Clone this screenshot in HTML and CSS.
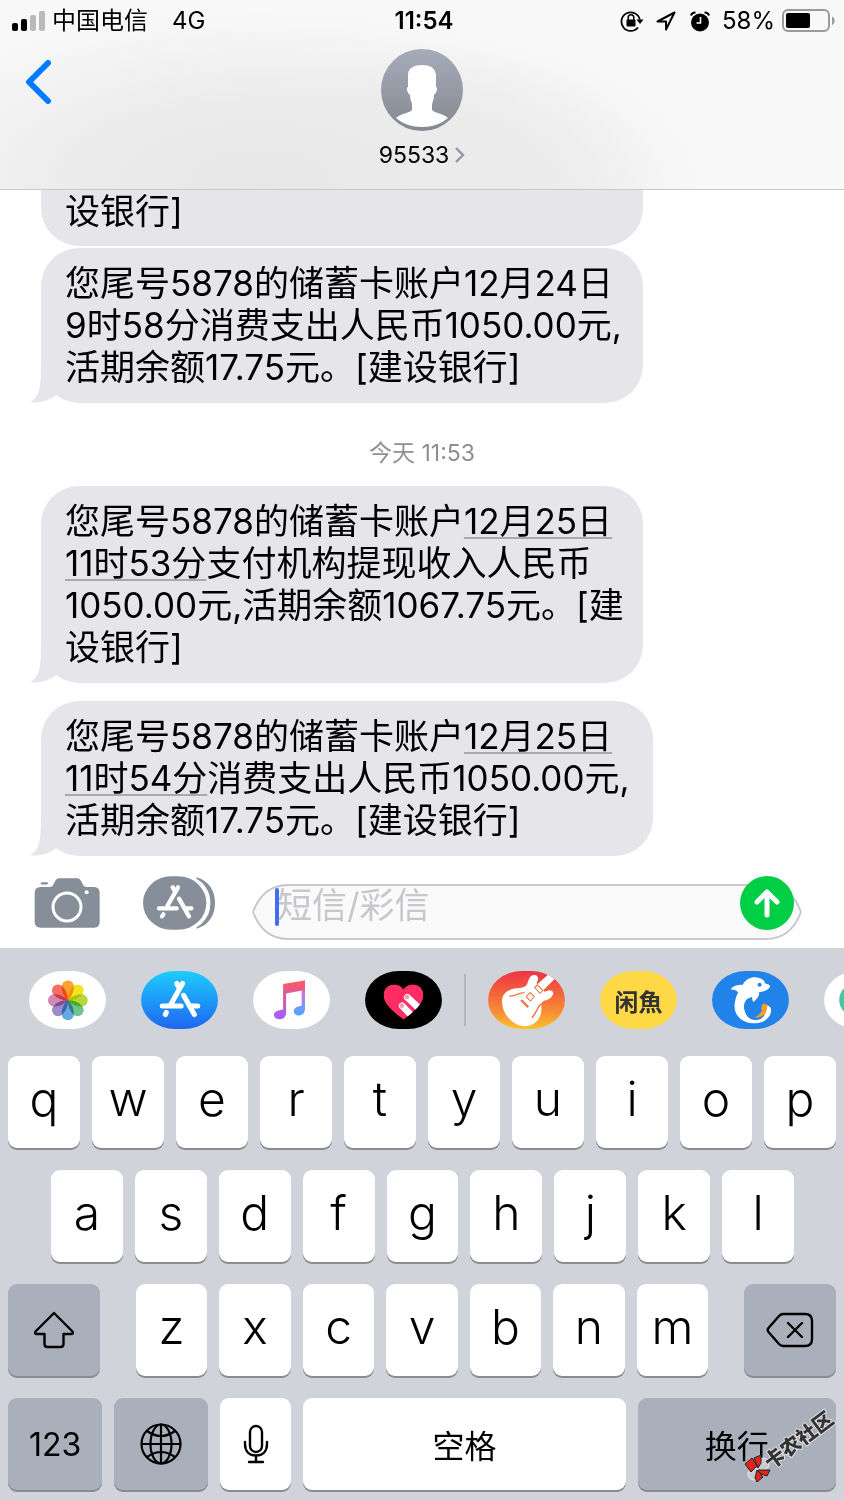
FILE: index.html
```html
<!DOCTYPE html>
<html lang="zh-CN">
<head>
  <meta charset="UTF-8">
  <meta name="viewport" content="width=device-width, initial-scale=1.0">
  <title>95533</title>
  <link rel="stylesheet" href="styles.css">
</head>
<body>
  <header class="header">
    <div class="status-bar">
      <div class="status-left">
        <svg class="signal" width="34" height="22" viewBox="0 0 34 22">
          <rect x="0" y="13" width="6" height="8" rx="2"/>
          <rect x="9" y="9" width="6" height="12" rx="2"/>
          <rect x="18" y="5" width="6" height="16" rx="2" fill="#bababa"/>
          <rect x="27" y="1" width="6" height="20" rx="2" fill="#bababa"/>
        </svg>
        <span>中国电信</span>
        <span class="network">4G</span>
      </div>
      <span class="clock">11:54</span>
      <div class="status-right">
        <svg width="24" height="22" viewBox="0 0 24 22">
          <path d="M18 17.500a9.300 9.300 0 1 1 1.800-8" fill="none" stroke="#000" stroke-width="1.800"/>
          <path d="M16.500 9.500h7l-3.500 4.500z"/>
          <rect x="6.500" y="9.500" width="9" height="7" rx="1"/>
          <path d="M8.200 10V7.600a2.800 2.800 0 0 1 5.600 0V10" fill="none" stroke="#000" stroke-width="1.500"/>
        </svg>
        <svg class="arrow-icon" width="20" height="20" viewBox="0 0 20 20">
          <path d="M18.500 1.500L1.500 10.500H10V18.500z" fill="none" stroke="#000" stroke-width="2" stroke-linejoin="round"/>
        </svg>
        <svg class="alarm-icon" width="20" height="21" viewBox="0 0 20 21">
          <circle cx="10" cy="11.500" r="9"/>
          <path d="M1 4.500C1.500 2.500 3 1.500 5.500 1.500M19 4.500C18.500 2.500 17 1.500 14.500 1.500" fill="none" stroke="#000" stroke-width="2"/>
          <path d="M10.500 6v6H6.500" fill="none" stroke="#fff" stroke-width="1.600"/>
        </svg>
        <span class="percent">58%</span>
        <svg width="54" height="24" viewBox="0 0 54 24">
          <rect x="1" y="1" width="46" height="21" rx="5" fill="none" stroke="#9a9a9a" stroke-width="2"/>
          <rect x="4" y="4" width="24" height="15" rx="2"/>
          <path d="M50 7.500c3.500 1.500 3.500 7 0 8.500z" fill="#9a9a9a"/>
        </svg>
      </div>
    </div>

    <div class="nav">
      <button class="back" aria-label="返回">
        <svg width="28" height="44" viewBox="0 0 28 44">
          <path d="M23 3L4 22L23 41" fill="none" stroke="#007aff" stroke-width="6" stroke-linecap="round" stroke-linejoin="round"/>
        </svg>
      </button>
      <button class="contact">
        <svg width="82" height="82" viewBox="0 0 82 82">
          <defs>
            <linearGradient id="avatar" x1="0" y1="0" x2="0" y2="1">
              <stop offset="0" stop-color="#a5abb9"/>
              <stop offset="1" stop-color="#858991"/>
            </linearGradient>
          </defs>
          <circle cx="41" cy="41" r="41" fill="url(#avatar)"/>
          <path d="M41 16C49 16 55 19 55 27L55 38C57 38 56 44 53 46C53 51 51 54 51 55V61C53 64 61 64 67 69C60 75 51 78 41 78C31 78 22 75 15 69C21 64 29 64 31 61V55C31 54 29 51 29 46C26 44 25 38 27 38V28C26 19 33 16 41 16Z" fill="#fff"/>
        </svg>
        <span class="contact-name">95533
          <svg width="10" height="16" viewBox="0 0 10 16"><path d="M1 1l7 7-7 7" fill="none" stroke="#8e9aa6" stroke-width="2.400"/></svg>
        </span>
      </button>
    </div>
  </header>

  <main class="messages">
    <div class="bubble bubble-cut">设银行]</div>

    <div class="bubble">您尾号5878的储蓄卡账户12月24日<br>9时58分消费支出人民币1050.00元,<br>活期余额17.75元。[建设银行]
      <svg class="tail" width="40" height="46" viewBox="0 0 40 46"><path d="M11 0C11 28 11 39 0 45.500C10 46 19 44 26 38L40 24V0Z"/></svg>
    </div>

    <time class="day">今天 11:53</time>

    <div class="bubble">您尾号5878的储蓄卡账户<a href="#">12月25日<br>11时53分</a>支付机构提现收入人民币<br>1050.00元,活期余额1067.75元。[建<br>设银行]
      <svg class="tail" width="40" height="46" viewBox="0 0 40 46"><path d="M11 0C11 28 11 39 0 45.500C10 46 19 44 26 38L40 24V0Z"/></svg>
    </div>

    <div class="bubble bubble-last">您尾号5878的储蓄卡账户<a href="#">12月25日<br>11时54分</a>消费支出人民币1050.00元,<br>活期余额17.75元。[建设银行]
      <svg class="tail" width="40" height="46" viewBox="0 0 40 46"><path d="M11 0C11 28 11 39 0 45.500C10 46 19 44 26 38L40 24V0Z"/></svg>
    </div>
  </main>

  <form class="composer">
    <button type="button" class="camera" aria-label="相机">
      <svg width="66" height="50" viewBox="0 0 198 150">
        <path d="M20 27Q2 27 2 45V132Q2 149 20 149H180Q197 149 197 132V45Q197 27 180 27H158Q150 27 147 20L141 8Q137 1 129 1H76Q68 1 64 8L58 20Q55 27 47 27Z" fill="#868e99"/>
        <path d="M24 16h14" stroke="#868e99" stroke-width="7" stroke-linecap="round"/>
        <circle cx="99" cy="87" r="42" fill="none" stroke="#fff" stroke-width="9"/>
        <circle cx="158" cy="43" r="6" fill="#fff"/>
      </svg>
    </button>
    <button type="button" class="store" aria-label="应用">
      <svg width="72" height="54" viewBox="0 0 216 162">
        <path d="M160 4C198 14 216 45 216 81S198 148 160 158Z" fill="#868e99"/>
        <rect x="-6" y="-5" width="208" height="172" rx="90" ry="82" fill="#fff"/>
        <rect x="0" y="1" width="190" height="160" rx="84" ry="80" fill="#868e99"/>
        <g stroke="#fff" stroke-width="13" stroke-linecap="round" fill="none">
          <path d="M105 34L73 90M61 115L57 121M89 34L97 48M108 68L138 121M48 97H101M130 97H145"/>
        </g>
      </svg>
    </button>
    <div class="field">
      <svg class="field-shape" viewBox="0 0 550 56" preserveAspectRatio="none">
        <path d="M1 28C7 12 18 1 36 1H514C532 1 543 12 549 28C543 44 532 55 514 55H36C18 55 7 44 1 28Z" fill="#fafafa" stroke="#c8c8cd" stroke-width="2"/>
      </svg>
      <input type="text" placeholder="短信/彩信" aria-label="短信/彩信">
      <span class="caret"></span>
      <button type="button" class="send" aria-label="发送">
        <svg width="54" height="54" viewBox="0 0 54 54">
          <path d="M27 39V16M17 26L27 16L37 26" fill="none" stroke="#fff" stroke-width="5" stroke-linecap="round" stroke-linejoin="round"/>
        </svg>
      </button>
    </div>
  </form>

  <section class="keyboard">
    <nav class="apps">
      <button class="app" aria-label="照片">
        <svg viewBox="0 0 228 172">
          <defs><path id="petal" d="M0 0C-11 -10 -18 -24 -18 -41A18 18 0 0 1 18 -41C18 -24 11 -10 0 0Z"/></defs>
          <rect width="228" height="172" fill="#fff"/>
          <g class="petals" transform="translate(115 87)">
            <use href="#petal" fill="#fba32e"/>
            <use href="#petal" fill="#f3e51e" transform="rotate(45)"/>
            <use href="#petal" fill="#b5d83b" transform="rotate(90)"/>
            <use href="#petal" fill="#6cc491" transform="rotate(135)"/>
            <use href="#petal" fill="#66a9e0" transform="rotate(180)"/>
            <use href="#petal" fill="#9c8ccb" transform="rotate(225)"/>
            <use href="#petal" fill="#d387b6" transform="rotate(270)"/>
            <use href="#petal" fill="#f56e61" transform="rotate(315)"/>
          </g>
        </svg>
      </button>
      <button class="app" aria-label="App Store">
        <svg viewBox="0 0 228 172">
          <defs>
            <linearGradient id="blue" x1="0" y1="0" x2="0" y2="1">
              <stop offset="0" stop-color="#1dcdfc"/>
              <stop offset="1" stop-color="#1f66f1"/>
            </linearGradient>
          </defs>
          <rect width="228" height="172" fill="url(#blue)"/>
          <g stroke="#fff" stroke-width="15" stroke-linecap="round" fill="none">
            <path d="M123 37L86 103M75 123L72 129M106 37L114 52M126 72L158 129M63 104H119M151 104H168"/>
          </g>
        </svg>
      </button>
      <button class="app" aria-label="音乐">
        <svg viewBox="0 0 228 172">
          <defs>
            <linearGradient id="noteLeft" gradientUnits="userSpaceOnUse" x1="0" y1="30" x2="0" y2="140">
              <stop offset="0" stop-color="#fc5a60"/>
              <stop offset="1" stop-color="#a45dff"/>
            </linearGradient>
            <linearGradient id="noteRight" gradientUnits="userSpaceOnUse" x1="0" y1="30" x2="0" y2="130">
              <stop offset="0" stop-color="#fb5a70"/>
              <stop offset="0.400" stop-color="#c878e0"/>
              <stop offset="1" stop-color="#46a9ff"/>
            </linearGradient>
          </defs>
          <rect width="228" height="172" fill="#fff"/>
          <path d="M144 30L154 28V112C154 126 144 132 135 132C126 132 121 126 121 120C121 108 130 106 144 103Z" fill="url(#noteRight)"/>
          <path d="M89 42Q89 39 93 38L154 28V56L98 67V124C98 137 88 143 79 143C68 143 62 137 62 131C62 119 74 117 89 114Z" fill="url(#noteLeft)"/>
        </svg>
      </button>
      <button class="app" aria-label="健康">
        <svg viewBox="0 0 228 172">
          <defs><clipPath id="heart"><path d="M114 144C92 127 55 100 55 72C55 38 97 29 114 55C131 29 173 38 173 72C173 100 136 127 114 144Z"/></clipPath></defs>
          <rect width="228" height="172" fill="#000"/>
          <g clip-path="url(#heart)">
            <rect width="228" height="172" fill="#ff2d64"/>
            <path d="M125 78L170 120M110 103L150 145" stroke="#fff" stroke-width="20" stroke-linecap="round"/>
            <circle cx="124" cy="77" r="7" fill="#ff9cab"/>
            <circle cx="109" cy="103" r="7" fill="#ff9cab"/>
          </g>
        </svg>
      </button>
      <span class="divider"></span>
      <button class="app" aria-label="库乐队">
        <svg viewBox="0 0 228 172">
          <defs>
            <linearGradient id="sunset" x1="0" y1="0" x2="0" y2="1">
              <stop offset="0" stop-color="#ee3344"/>
              <stop offset="0.700" stop-color="#f88c35"/>
              <stop offset="1" stop-color="#fbc22d"/>
            </linearGradient>
          </defs>
          <rect width="228" height="172" fill="url(#sunset)"/>
          <path d="M42 98C38 73 53 57 78 52C91 51 106 51 112 44C120 38 119 15 134 12C149 10 151 24 146 31C142 38 146 40 149 37L180 9L198 23L166 55C163 61 168 63 174 59C184 55 195 59 193 67C191 79 177 87 167 88C154 91 160 103 158 118C156 145 134 164 109 164C78 162 45 134 42 98Z" fill="#fff"/>
          <path d="M63 74C81 77 89 64 108 64M159 96C145 107 145 123 130 139" stroke="#ef7440" stroke-width="4" fill="none"/>
          <path d="M98 86L119 107" stroke="#ef7440" stroke-width="7"/>
          <path d="M113 76L125 64L137 76L126 89ZM138 49L146 41L163 58L154 66Z" stroke="#ef7440" stroke-width="3" fill="none"/>
        </svg>
      </button>
      <button class="app app-fish">闲魚</button>
      <button class="app" aria-label="携程">
        <svg viewBox="0 0 228 172">
          <rect width="228" height="172" fill="#2182e9"/>
          <path d="M55 54C63 43 78 40 91 41C99 24 116 17 133 19C148 20 155 29 158 37C166 38 173 42 172 47C167 58 151 62 139 63C142 72 136 79 123 92C119 88 119 82 119 77C101 80 93 93 95 112C99 134 112 145 128 145C144 146 155 137 158 122C149 122 144 113 149 105C156 97 168 101 174 110C180 132 158 154 130 155C87 157 60 129 68 91C70 80 73 71 77 65C76 58 66 55 55 54Z" fill="#fff"/>
          <path d="M103 84C96 108 106 133 130 139C117 126 108 109 110 84Z" fill="#2182e9"/>
          <path d="M124 138C148 140 163 127 163 109A8 8 0 0 0 148 101C151 118 144 130 124 138Z" fill="#ff9a1e"/>
          <circle cx="141" cy="41" r="6" fill="#2182e9"/>
        </svg>
      </button>
      <button class="app" aria-label="更多">
        <svg viewBox="0 0 228 172">
          <rect width="228" height="172" fill="#fff"/>
          <circle cx="95" cy="86" r="50" fill="#4bc5a5"/>
        </svg>
      </button>
    </nav>

    <div class="keys">
      <div class="row">
        <button class="key">q</button>
        <button class="key">w</button>
        <button class="key">e</button>
        <button class="key">r</button>
        <button class="key">t</button>
        <button class="key">y</button>
        <button class="key">u</button>
        <button class="key">i</button>
        <button class="key">o</button>
        <button class="key">p</button>
      </div>
      <div class="row row-middle">
        <button class="key">a</button>
        <button class="key">s</button>
        <button class="key">d</button>
        <button class="key">f</button>
        <button class="key">g</button>
        <button class="key">h</button>
        <button class="key">j</button>
        <button class="key">k</button>
        <button class="key">l</button>
      </div>
      <div class="row-shift">
        <button class="key key-dark" aria-label="大写">
          <svg width="42" height="38" viewBox="0 0 42 38">
            <path d="M21 2L39.500 20.500Q41 23 38 23H30.500V33Q30.500 36 27.500 36H14.500Q11.500 36 11.500 33V23H4Q1 23 2.500 20.500Z" fill="none" stroke="#000" stroke-width="2.400" stroke-linejoin="round"/>
          </svg>
        </button>
        <div class="row">
          <button class="key">z</button>
          <button class="key">x</button>
          <button class="key">c</button>
          <button class="key">v</button>
          <button class="key">b</button>
          <button class="key">n</button>
          <button class="key">m</button>
        </div>
        <button class="key key-dark" aria-label="删除">
          <svg width="48" height="36" viewBox="0 0 48 36">
            <path d="M17 2H39Q46 2 46 9V27Q46 34 39 34H17Q15 34 13 32L2.500 20Q1 18 2.500 16L13 4Q15 2 17 2Z" fill="none" stroke="#000" stroke-width="2.400"/>
            <path d="M22 11L36 25M36 11L22 25" stroke="#000" stroke-width="2.400" stroke-linecap="round"/>
          </svg>
        </button>
      </div>
      <div class="row-space">
        <button class="key key-dark key-word">123</button>
        <button class="key key-dark" aria-label="切换键盘">
          <svg width="42" height="42" viewBox="0 0 42 42" fill="none" stroke="#000" stroke-width="2.200">
            <circle cx="21" cy="21" r="19.500"/>
            <ellipse cx="21" cy="21" rx="10.500" ry="19.500"/>
            <path d="M21 1V41M1 21H41M7 8Q21 18 35 8M7 34Q21 24 35 34"/>
          </svg>
        </button>
        <button class="key" aria-label="听写">
          <svg width="26" height="40" viewBox="0 0 26 40" fill="none" stroke="#000" stroke-width="2.400" stroke-linecap="round">
            <rect x="7" y="2" width="12" height="26" rx="6"/>
            <path d="M2 18V20C2 27 6 31.500 13 31.500S24 27 24 20V18M13 32V38M6 38H20"/>
          </svg>
        </button>
        <button class="key key-word">空格</button>
        <button class="key key-dark key-word">换行</button>
      </div>
    </div>

    <svg class="watermark" width="106" height="84" viewBox="0 -8 106 84">
      <g transform="translate(8 50)" stroke="#222" stroke-width="1">
        <circle cx="18" cy="8" r="6" fill="#c8ccd2" stroke="#eee"/>
        <circle cx="9" cy="18" r="6" fill="#c8ccd2" stroke="#eee"/>
        <path d="M0 8L7 2L12 10L6 16ZM9 2L16 -1L16 7L13 12ZM13 14L25 14L22 20L16 18ZM12 14L18 21L12 26L10 22Z" fill="#e4231b"/>
      </g>
      <text x="34" y="64" transform="rotate(-37 34 64)">卡农社区</text>
    </svg>
  </section>
</body>
</html>
```
FILE: styles.css
```css
* {
  box-sizing: border-box;
}
body {
  margin: 0;
  min-height: 100vh;
  display: flex;
  flex-direction: column;
  background: #fff;
  color: #000;
  font-family: Inter, "Noto Sans CJK SC", sans-serif;
}
button {
  padding: 0;
  border: none;
  background: none;
  color: inherit;
  font-family: inherit;
  cursor: pointer;
}
svg {
  display: block;
}

/* Header */
.header {
  height: 190px;
  border-bottom: 1px solid #c9c9cb;
  background: radial-gradient(ellipse 400px 170px at 260px 180px, #e7e7e8 0%, #ebebec 45%, rgba(248, 248, 248, 0) 100%),
    radial-gradient(ellipse 260px 150px at 440px 190px, #e8e8ea 0%, #ececed 40%, rgba(248, 248, 248, 0) 100%),
    #f8f8f8;
}
.status-bar {
  display: grid;
  grid-template-columns: 1fr auto 1fr;
  align-items: center;
  height: 42px;
  padding: 0 8px 0 12px;
  font-size: 24px;
  line-height: 28px;
}
.status-left,
.status-right {
  display: flex;
  align-items: center;
}
.status-right {
  justify-content: flex-end;
}
.signal {
  margin-right: 6px;
}
.network {
  margin-left: 24px;
}
.clock {
  font-weight: 600;
}
.arrow-icon {
  margin: 0 14px 0 12px;
}
.percent {
  margin: 0 7px 0 12px;
}
.nav {
  display: grid;
  grid-template-columns: 1fr auto 1fr;
  align-items: start;
  padding: 7px 25px 0;
}
.back {
  justify-self: start;
  margin-top: 11px;
}
.contact {
  display: flex;
  flex-direction: column;
  align-items: center;
  gap: 10px;
}
.contact-name {
  display: flex;
  align-items: center;
  gap: 6px;
  font-size: 23px;
  line-height: 28px;
}

/* Messages */
.messages {
  flex: 1;
  display: flex;
  flex-direction: column;
  align-items: flex-start;
  padding-left: 41px;
}
.bubble {
  position: relative;
  min-width: 602px;
  padding: 14px 19px 15px 24px;
  border-radius: 38px;
  background: #e5e5ea;
  font-size: 35px;
  line-height: 42px;
  white-space: nowrap;
}
.bubble-cut {
  margin-bottom: 2px;
  padding: 0 19px 14px 24px;
  border-radius: 0 0 38px 38px;
}
.bubble-last {
  min-width: 612px;
  margin-top: 18px;
}
.bubble a {
  color: inherit;
  text-decoration: underline;
  text-decoration-color: #a9a9ad;
  text-decoration-thickness: 2px;
  text-underline-offset: 3px;
}
.tail {
  position: absolute;
  left: -11px;
  bottom: 0;
  z-index: -1;
  fill: #e5e5ea;
}
.day {
  align-self: stretch;
  margin: 36px 41px 19px 0;
  color: #8e8e93;
  font-size: 23px;
  line-height: 28px;
  text-align: center;
}

/* Composer */
.composer {
  display: flex;
  align-items: flex-start;
  padding: 20px 42px 8px 34px;
}
.camera {
  margin-top: 2px;
}
.store {
  margin: 0 37px 0 43px;
}
.field {
  position: relative;
  flex: 1;
  height: 56px;
  margin-top: 8px;
}
.field-shape {
  position: absolute;
  width: 100%;
  height: 100%;
}
.field input {
  position: relative;
  width: 100%;
  height: 42px;
  padding: 0 70px 0 25px;
  border: none;
  outline: none;
  background: transparent;
  font: 400 35px Inter, "Noto Sans CJK SC", sans-serif;
}
.field input::placeholder {
  color: #c7c7cc;
}
.caret {
  position: absolute;
  left: 23px;
  top: 4px;
  width: 4px;
  height: 38px;
  border-radius: 2px;
  background: #426bf2;
}
.send {
  position: absolute;
  right: 8px;
  top: -8px;
  border-radius: 50%;
  background: #00cf46;
}

/* Keyboard */
.keyboard {
  position: relative;
  overflow: hidden;
  background: #d0d3da;
}
.apps {
  display: flex;
  align-items: center;
  gap: 35px;
  padding: 23px 0 0 29px;
}
.app {
  flex: none;
  width: 77px;
  height: 58px;
  border-radius: 34px / 29px;
  overflow: hidden;
}
.app svg {
  width: 100%;
  height: 100%;
}
.petals use {
  mix-blend-mode: multiply;
}
.app-fish {
  background: #fed945;
  color: #333;
  font-size: 24px;
  font-weight: 700;
}
.divider {
  flex: none;
  width: 2px;
  height: 52px;
  margin: 0 -13px;
  background: #b3b5bb;
}
.keys {
  display: flex;
  flex-direction: column;
  gap: 22px;
  padding: 27px 8px 10px;
}
.row {
  display: flex;
  gap: 12px;
}
.row-middle {
  padding: 0 42px 0 43px;
}
.row-shift {
  display: grid;
  grid-template-columns: 92fr 573fr 92fr;
  gap: 36px;
}
.row-space {
  display: grid;
  grid-template-columns: 94fr 94fr 71fr 322fr 198fr;
  gap: 12px;
}
.key {
  flex: 1;
  display: flex;
  align-items: center;
  justify-content: center;
  min-width: 0;
  height: 92px;
  padding-bottom: 8px;
  border-radius: 9px;
  background: #fff;
  box-shadow: 0 2px 0 #898b8f;
  font-size: 48px;
  font-weight: 350;
}
.key svg {
  margin-top: 8px;
}
.key-dark {
  background: #a9afbb;
}
.key-word {
  padding-bottom: 0;
  font-size: 32px;
  font-weight: 400;
}
.watermark {
  position: absolute;
  right: 1px;
  bottom: 18px;
}
.watermark text {
  fill: #333;
  stroke: #ddd;
  stroke-width: 2px;
  paint-order: stroke;
  font-size: 20px;
  font-weight: 900;
}
```
